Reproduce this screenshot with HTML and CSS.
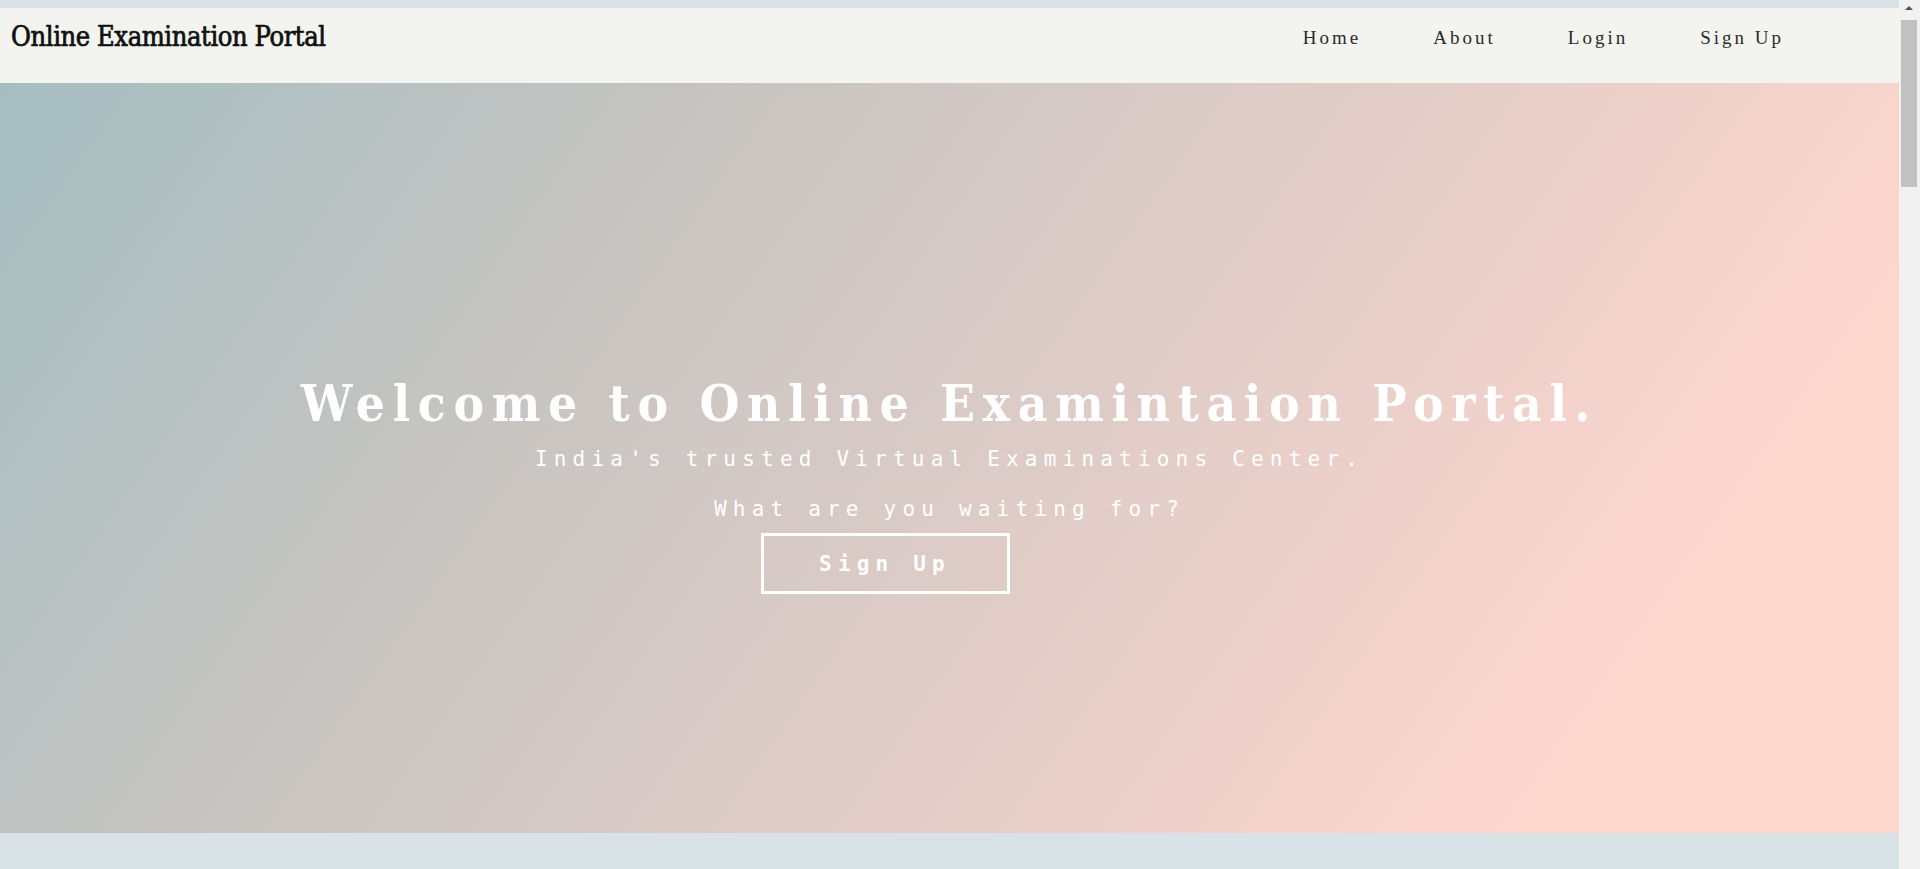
FILE: index.html
```html
<!DOCTYPE html>
<html lang="en">
<head>
<meta charset="utf-8">
<title>Online Examination Portal</title>
<link rel="stylesheet" href="styles.css">
</head>
<body>
<div class="window">
  <div class="page">
    <header class="navbar">
      <div class="brand">Online Examination Portal</div>
      <nav class="nav">
        <a class="nav-link" href="#">Home</a>
        <a class="nav-link" href="#">About</a>
        <a class="nav-link" href="#">Login</a>
        <a class="nav-link" href="#">Sign Up</a>
      </nav>
    </header>
    <section class="hero">
      <h1 class="hero-title">Welcome to Online Examintaion Portal.</h1>
      <p class="hero-sub">India's trusted Virtual Examinations Center.</p>
      <p class="hero-ask">What are you waiting for?</p>
      <a class="hero-btn" href="#">Sign Up</a>
    </section>
  </div>
  <div class="scrollbar" aria-hidden="true">
    <div class="scroll-btn"><span class="arrow-up"></span></div>
    <div class="scroll-thumb"></div>
  </div>
</div>
</body>
</html>
```
FILE: styles.css
```css
html, body {
  margin: 0;
  padding: 0;
  height: 100%;
  overflow: hidden;
}
body {
  background: #d8e2e7;
}
.window {
  display: flex;
  height: 100vh;
}
.page {
  flex: 1;
  min-width: 0;
  padding-top: 8px;
  background: #d8e2e7;
}
.scrollbar {
  width: 21px;
  flex: none;
  display: flex;
  flex-direction: column;
  align-items: center;
  background: #f1f1f1;
}
.scroll-btn {
  height: 20px;
  width: 100%;
  display: flex;
  justify-content: center;
  align-items: center;
}
.arrow-up {
  width: 0;
  height: 0;
  border-left: 4px solid transparent;
  border-right: 4px solid transparent;
  border-bottom: 4px solid #505050;
  margin-top: -4px;
  margin-left: -2px;
}
.scroll-thumb {
  width: 16px;
  height: 167px;
  margin-left: -2px;
  background: #c1c1c1;
}
.navbar {
  display: flex;
  justify-content: space-between;
  align-items: flex-start;
  height: 75px;
  background: #f3f4ef;
}
.brand {
  font-family: "DejaVu Serif Condensed", "DejaVu Serif", serif;
  font-stretch: condensed;
  font-weight: normal;
  font-size: 27px;
  line-height: 40px;
  letter-spacing: -0.4px;
  color: #111;
  -webkit-text-stroke: 0.7px #111;
  padding: 9px 0 0 11px;
}
.nav {
  display: flex;
  margin: 15px 79px 0 0;
}
.nav-link {
  font-family: "Liberation Serif", "Times New Roman", serif;
  font-size: 19px;
  line-height: 30px;
  letter-spacing: 3px;
  color: #2b2b2b;
  text-decoration: none;
  padding: 0 36px;
}
.hero {
  height: 750px;
  box-sizing: border-box;
  padding-top: 290px;
  display: flex;
  flex-direction: column;
  align-items: center;
  background: linear-gradient(125deg, #a5bec2 0%, #c6c4c1 29%, #dfccc7 55%, #fdd6ce 84%, #fdd6ce 100%);
  color: #fff;
}
.hero-title {
  margin: 0;
  font-family: "DejaVu Serif Condensed", "DejaVu Serif", serif;
  font-stretch: condensed;
  font-weight: bold;
  font-size: 51px;
  line-height: 60px;
  letter-spacing: 7.7px;
}
.hero-sub,
.hero-ask,
.hero-btn {
  font-family: "DejaVu Sans Mono", "Liberation Mono", monospace;
  font-size: 21px;
  line-height: 30px;
  letter-spacing: 6.2px;
}
.hero-sub {
  margin: 11px 0 0;
}
.hero-ask {
  margin: 20px 0 0;
}
.hero-btn {
  margin: 9px 129px 0 0;
  width: 249px;
  box-sizing: border-box;
  border: 3px solid #fff;
  padding: 13px 0 12px;
  text-align: center;
  font-weight: bold;
  color: #fff;
  text-decoration: none;
}
```
